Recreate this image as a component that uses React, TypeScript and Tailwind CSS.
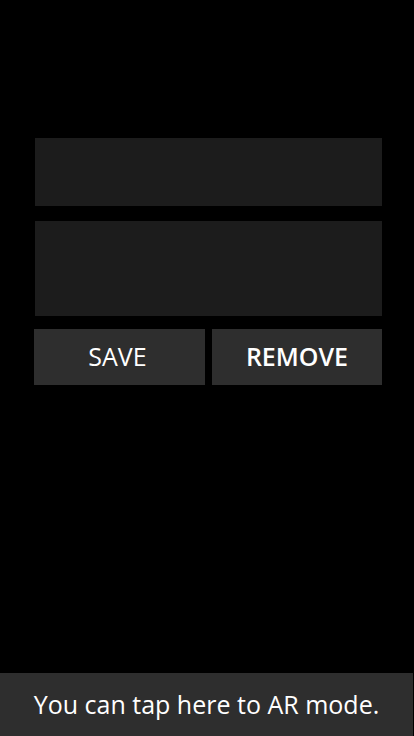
export default function App() {
  return (
    <div className="relative h-[736px] w-[414px] bg-black" style={{ fontFamily: '"Open Sans", "Noto Sans", sans-serif' }}>
      <div className="flex flex-col pt-[138px] pl-[34px] pr-[32px]">
        <div className="ml-px h-[68px] bg-[#1c1c1c]" />
        <div className="ml-px mt-[15px] h-[95px] bg-[#1c1c1c]" />
        <div className="mt-[13px] flex gap-[7px]">
          <button className="flex h-[56px] w-[171px] items-center justify-center bg-[#2e2e2e] pr-[4px] text-[25px] text-white">
            SAVE
          </button>
          <button className="flex h-[56px] flex-1 items-center justify-center bg-[#2e2e2e] text-[25px] font-semibold text-white">
            REMOVE
          </button>
        </div>
      </div>
      <div className="absolute bottom-0 left-0 flex h-[63px] w-[413px] items-center justify-center bg-[#2e2e2e] pt-px text-[25px] text-white">
        You can tap here to AR mode.
      </div>
    </div>
  );
}
